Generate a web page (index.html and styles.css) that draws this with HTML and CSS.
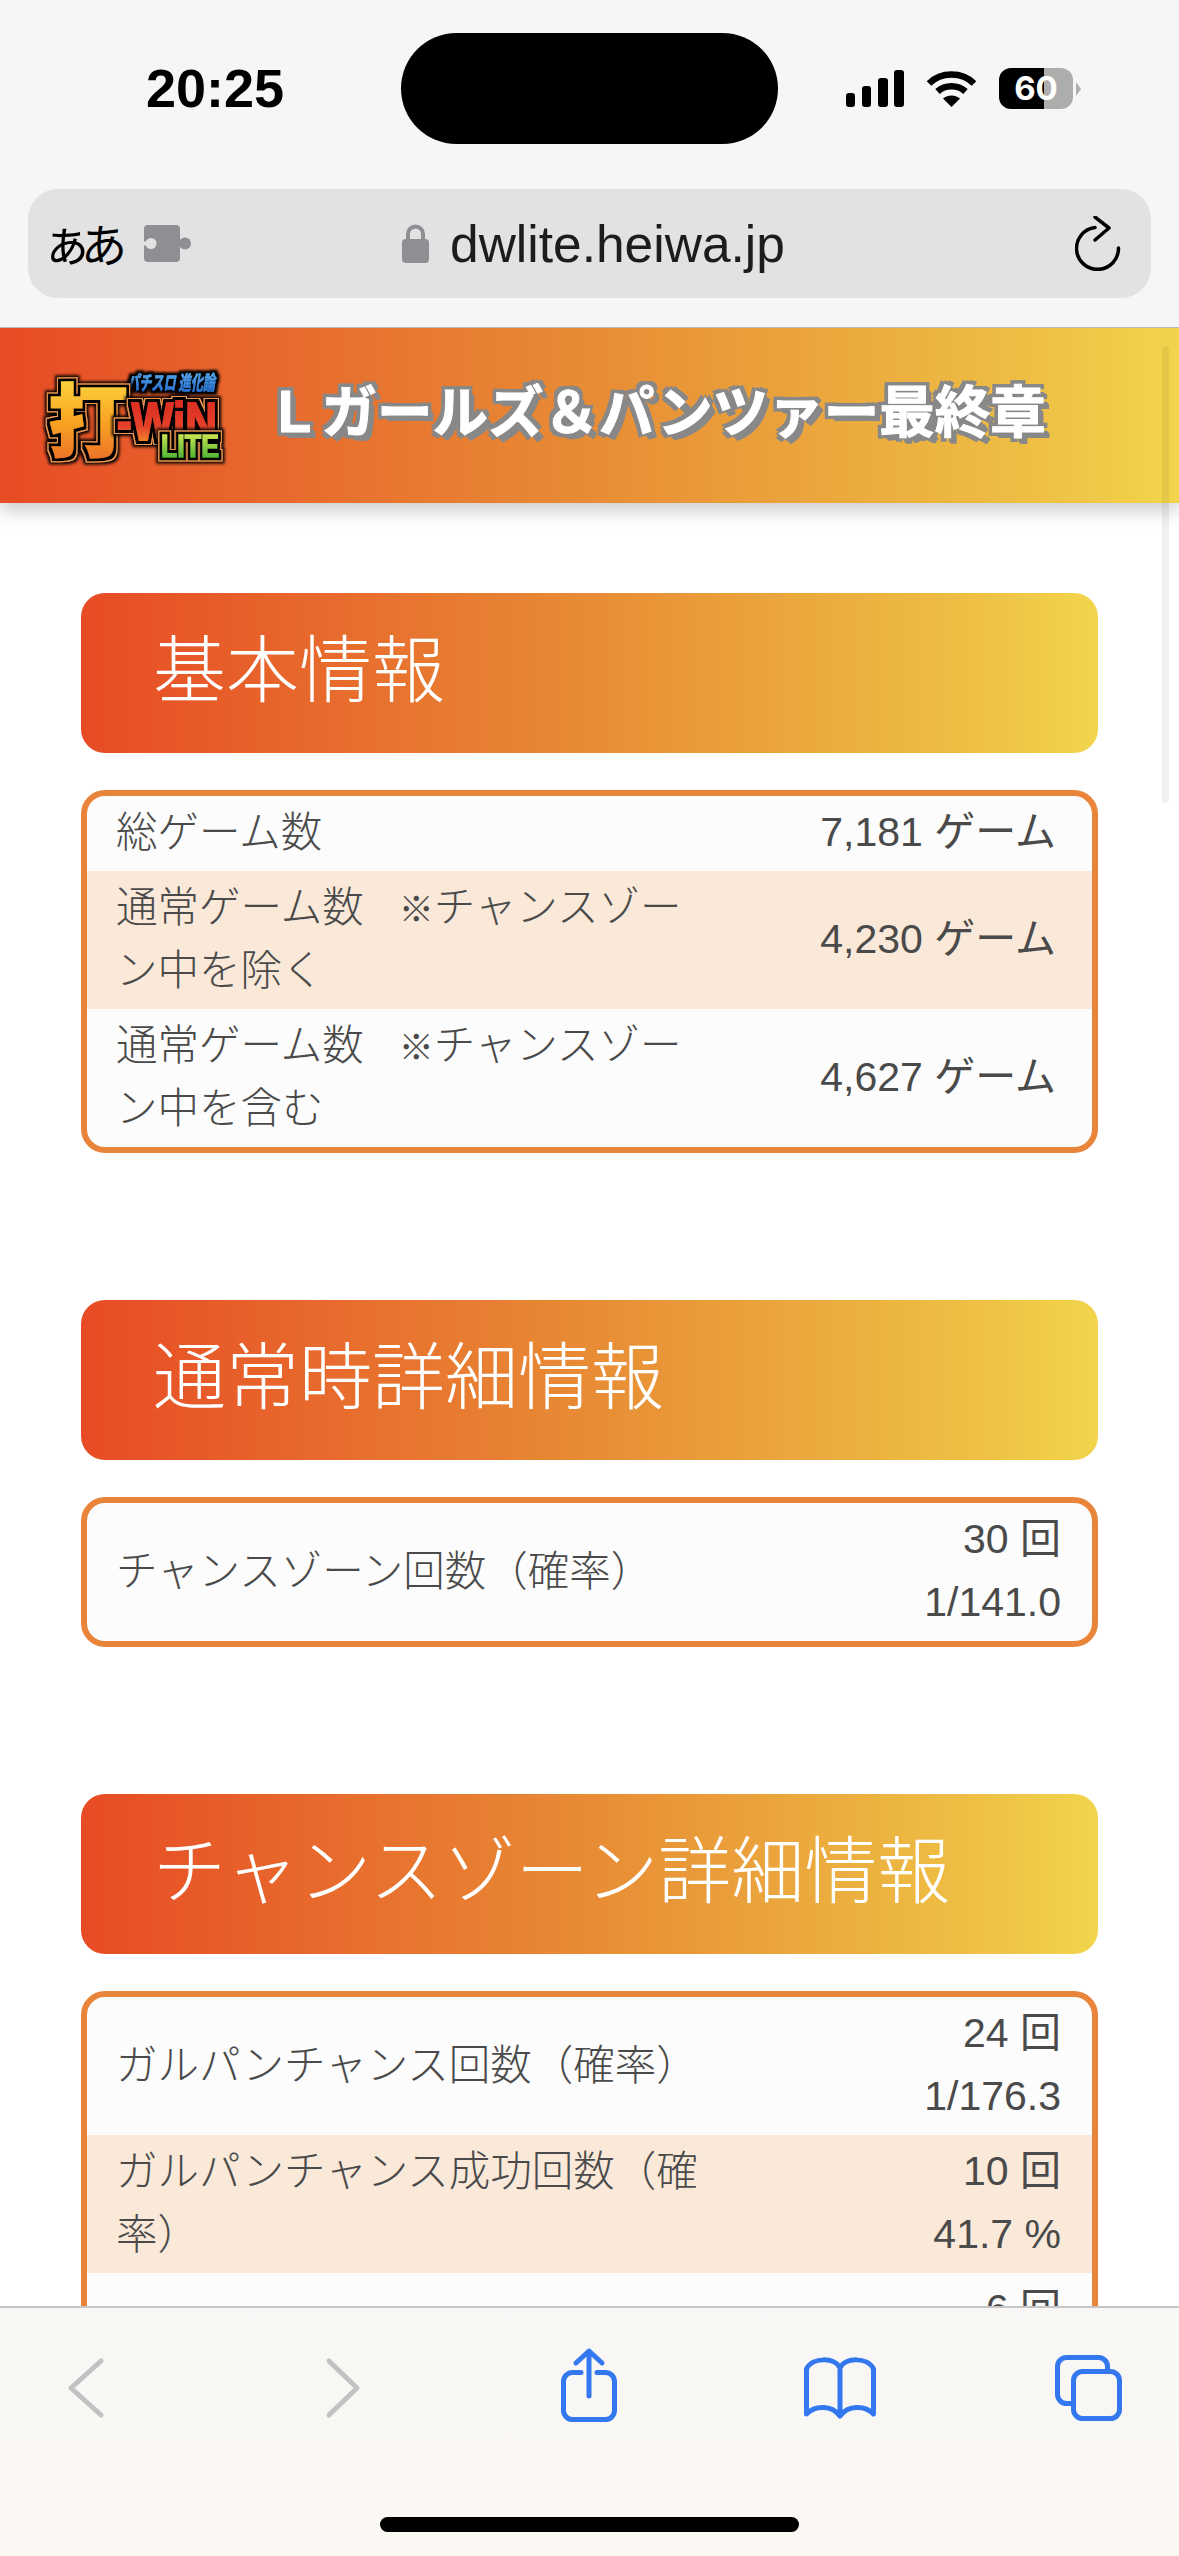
FILE: index.html
```html
<!doctype html>
<html lang="ja">
  <head>
    <meta charset="UTF-8" />
    <meta name="viewport" content="width=device-width, initial-scale=1.0" />
    <title>打-WIN LITE</title>
    <link rel="stylesheet" href="styles.css">
  </head>
  <body>
    <div class="phone">
      <!-- Safari の上部バー -->
      <div class="browser-top">
        <div class="status-bar">
          <div class="time">20:25</div>
          <div class="island"></div>
          <div class="status-icons">
            <svg class="signal" width="58" height="37" viewBox="0 0 58 37">
              <rect x="0" y="23" width="9" height="14" rx="3" />
              <rect x="16" y="16" width="9" height="21" rx="3" />
              <rect x="32" y="8" width="10" height="29" rx="3" />
              <rect x="48" y="0" width="10" height="37" rx="3" />
            </svg>
            <svg class="wifi" width="51" height="37" viewBox="0 0 51 37">
              <path d="M3 13.5C15 1.500 36 1.500 48 13.500" fill="none" stroke="#000" stroke-width="6.500" />
              <path d="M11.500 21.500C19 14.500 32 14.500 39.500 21.500" fill="none" stroke="#000" stroke-width="6.500" />
              <path d="M17 28.500C22 24.500 29 24.500 34 28.500L25.500 37Z" />
            </svg>
            <div class="battery">
              <div class="battery-body">60</div>
              <div class="battery-tip"></div>
            </div>
          </div>
        </div>

        <div class="url-bar">
          <div class="url-left">
            <span class="aa"><span class="aa-small">ぁ</span>あ</span>
            <svg width="47" height="37" viewBox="0 0 47 37">
              <rect x="0" y="0" width="36" height="37" rx="4" fill="#8e8e93" />
              <rect x="34" y="15" width="8" height="7" fill="#8e8e93" />
              <circle cx="41" cy="18.500" r="6" fill="#8e8e93" />
              <circle cx="7" cy="18.500" r="5.500" fill="#e2e2e2" />
              <rect x="0" y="16.500" width="5" height="4" fill="#e2e2e2" />
            </svg>
          </div>
          <div class="url-center">
            <svg width="27" height="39" viewBox="0 0 27 39">
              <path d="M6 17V10a7.500 7.500 0 0 1 15 0V17" fill="none" stroke="#8e8e93" stroke-width="4" />
              <rect x="0" y="15" width="27" height="24" rx="4" fill="#8e8e93" />
            </svg>
            <span class="url-text">dwlite.heiwa.jp</span>
          </div>
          <svg class="reload" width="47" height="55" viewBox="0 0 47 55">
            <path d="M20 11.500A21 21 0 1 0 43.500 32" fill="none" stroke="#000" stroke-width="3.500" stroke-linecap="round" />
            <path d="M20 1L34 12L20 24" fill="none" stroke="#000" stroke-width="3.500" stroke-linecap="round" stroke-linejoin="round" />
          </svg>
        </div>
      </div>

      <div class="page">
        <div class="scroll-thumb"></div>

        <header class="site-header">
          <svg class="logo" width="182" height="99" viewBox="0 0 182 99">
            <defs>
              <linearGradient id="logo-yellow" x1="0" y1="0" x2="0" y2="1">
                <stop offset="0" stop-color="#ffe94a" />
                <stop offset="0.55" stop-color="#f9a423" />
                <stop offset="1" stop-color="#e8622a" />
              </linearGradient>
              <linearGradient id="logo-red" x1="0" y1="0" x2="0" y2="1">
                <stop offset="0" stop-color="#d8261f" />
                <stop offset="0.6" stop-color="#e4412a" />
                <stop offset="1" stop-color="#f8b52c" />
              </linearGradient>
              <linearGradient id="logo-green" x1="0" y1="0" x2="0" y2="1">
                <stop offset="0" stop-color="#e6f05a" />
                <stop offset="1" stop-color="#2fa82c" />
              </linearGradient>
              <linearGradient id="logo-blue" x1="0" y1="0" x2="0" y2="1">
                <stop offset="0" stop-color="#63b6f0" />
                <stop offset="1" stop-color="#1c62c8" />
              </linearGradient>
              <!-- 文字の縁取り: 黒 / オレンジ / 黒のにじみ -->
              <filter id="logo-outline" filterUnits="userSpaceOnUse" x="-10" y="-10" width="202" height="119">
                <feMorphology in="SourceAlpha" operator="dilate" radius="6" result="wide" />
                <feGaussianBlur in="wide" stdDeviation="1.500" result="glow" />
                <feMorphology in="SourceAlpha" operator="dilate" radius="4" result="mid" />
                <feFlood flood-color="#f09a52" />
                <feComposite in2="mid" operator="in" result="rim" />
                <feMorphology in="SourceAlpha" operator="dilate" radius="2.800" result="edge" />
                <feMerge>
                  <feMergeNode in="glow" />
                  <feMergeNode in="rim" />
                  <feMergeNode in="edge" />
                  <feMergeNode in="SourceGraphic" />
                </feMerge>
              </filter>
              <filter id="logo-outline-thin" filterUnits="userSpaceOnUse" x="-10" y="-10" width="202" height="119">
                <feMorphology in="SourceAlpha" operator="dilate" radius="3" result="edge" />
                <feGaussianBlur in="edge" stdDeviation="0.800" result="glow" />
                <feMerge>
                  <feMergeNode in="glow" />
                  <feMergeNode in="SourceGraphic" />
                </feMerge>
              </filter>
            </defs>
            <text class="logo-sub" x="84" y="22" textLength="88" lengthAdjust="spacingAndGlyphs" fill="url(#logo-blue)" stroke="url(#logo-blue)" filter="url(#logo-outline-thin)">パチスロ 進化論</text>
            <text class="logo-da" x="6" y="82" fill="url(#logo-yellow)" stroke="url(#logo-yellow)" filter="url(#logo-outline)">打</text>
            <text class="logo-win" x="74" y="72" textLength="100" lengthAdjust="spacingAndGlyphs" fill="url(#logo-red)" stroke="url(#logo-red)" filter="url(#logo-outline)">-WiN</text>
            <text class="logo-lite" x="118" y="89" textLength="58" lengthAdjust="spacingAndGlyphs" fill="url(#logo-green)" stroke="url(#logo-green)" filter="url(#logo-outline)">LITE</text>
          </svg>
          <h1 class="site-title">Ｌガールズ＆パンツァー最終章</h1>
        </header>

        <section class="block first">
          <h2 class="block-title">基本情報</h2>
          <div class="data-box">
            <table class="data-table">
              <tr>
                <td class="label">総ゲーム数</td>
                <td class="value game">7,181 ゲーム</td>
              </tr>
              <tr>
                <td class="label">通常ゲーム数<span class="mark">　※</span>チャンスゾーン中を除く</td>
                <td class="value game">4,230 ゲーム</td>
              </tr>
              <tr>
                <td class="label">通常ゲーム数<span class="mark">　※</span>チャンスゾーン中を含む</td>
                <td class="value game">4,627 ゲーム</td>
              </tr>
            </table>
          </div>
        </section>

        <section class="block">
          <h2 class="block-title">通常時詳細情報</h2>
          <div class="data-box">
            <table class="data-table">
              <tr>
                <td class="label">チャンスゾーン回数（確率）</td>
                <td class="value">30 回<br />1/141.0</td>
              </tr>
            </table>
          </div>
        </section>

        <section class="block">
          <h2 class="block-title">チャンスゾーン詳細情報</h2>
          <div class="data-box">
            <table class="data-table">
              <tr>
                <td class="label">ガルパンチャンス回数（確率）</td>
                <td class="value">24 回<br />1/176.3</td>
              </tr>
              <tr>
                <td class="label">ガルパンチャンス成功回数（確率）</td>
                <td class="value">10 回<br />41.7 %</td>
              </tr>
              <tr>
                <td class="label"></td>
                <td class="value">6 回</td>
              </tr>
            </table>
          </div>
        </section>
      </div>

      <!-- Safari の下部ツールバー -->
      <footer class="toolbar">
        <div class="toolbar-icons">
          <svg class="tool-back" width="40" height="80" viewBox="0 0 40 80">
            <path class="tool-off" d="M35 16L5 43L35 70" />
          </svg>
          <svg class="tool-forward" width="38" height="80" viewBox="0 0 38 80">
            <path class="tool-off" d="M5 16L33 43L5 70" />
          </svg>
          <svg class="tool-share" width="66" height="80" viewBox="0 0 66 80">
            <path class="tool-on" d="M25 27.500H16.500a9 9 0 0 0-9 9V65.500a9 9 0 0 0 9 9H49.500a9 9 0 0 0 9-9V36.500a9 9 0 0 0-9-9H41" />
            <path class="tool-on" d="M33 51V6M20 18L33 6L46 18" />
          </svg>
          <svg class="tool-book" width="80" height="80" viewBox="0 0 80 80">
            <path class="tool-on" d="M40 23C35 12 12 12 6.500 24V69C15 60 32 60 40 71C48 60 65 60 73.500 69V24C68 12 45 12 40 23ZM40 23V71" />
          </svg>
          <svg class="tool-tabs" width="77" height="80" viewBox="0 0 77 80">
            <rect class="tool-on" x="23.500" y="26.500" width="46" height="47" rx="9" />
            <path class="tool-on" d="M57.500 26V21.500a9 9 0 0 0-9-9H16.500a9 9 0 0 0-9 9V49.500a9 9 0 0 0 9 9H23" />
          </svg>
        </div>
        <div class="home-bar"></div>
      </footer>
    </div>
  </body>
</html>
```

FILE: styles.css
```css
* {
  box-sizing: border-box;
}

html,
body {
  margin: 0;
  padding: 0;
  overflow: hidden;
}

body {
  font-family: "Liberation Sans", "Noto Sans CJK JP", sans-serif;
  background-color: #fff;
  color: #4a4a4a;
}

.phone {
  width: 1179px;
  height: 2556px;
  display: flex;
  flex-direction: column;
}

/* --- browser top --- */
.browser-top {
  height: 327px;
  flex-shrink: 0;
  padding-top: 33px;
  background-color: #f6f6f6;
}

.status-bar {
  height: 111px;
  display: flex;
  align-items: center;
  padding-left: 146px;
}

.time {
  width: 255px;
  padding-bottom: 2px;
  font-size: 54px;
  font-weight: bold;
  color: #000;
}

.island {
  width: 377px;
  height: 111px;
  border-radius: 56px;
  background-color: #000;
}

.status-icons {
  display: flex;
  align-items: center;
  margin-left: 68px;
}

.wifi {
  margin-left: 22px;
}

.battery {
  display: flex;
  align-items: center;
  margin-left: 22px;
}

.battery-body {
  width: 74px;
  height: 41px;
  border-radius: 12px;
  background: linear-gradient(to right, #000 61%, #adadad 61%);
  color: #fff;
  font-family: Inter, "Liberation Sans", sans-serif;
  font-size: 33px;
  font-weight: 700;
  line-height: 41px;
  text-align: center;
}

.battery-tip {
  width: 0;
  height: 0;
  margin-left: 3px;
  border-top: 7px solid transparent;
  border-bottom: 7px solid transparent;
  border-left: 5px solid #adadad;
}

.url-bar {
  height: 109px;
  margin: 45px 28px 0 28px;
  padding: 0 29px 0 14px;
  display: flex;
  align-items: center;
  border-radius: 30px;
  background-color: #e2e2e2;
  color: #000;
}

.url-left {
  width: 360px;
  display: flex;
  align-items: center;
  gap: 17px;
}

.aa {
  padding-bottom: 5px;
  font-family: "Noto Sans CJK JP", sans-serif;
  font-size: 46px;
  line-height: 60px;
}

.aa-small {
  font-size: 50px;
  letter-spacing: -11px;
}

.url-center {
  flex: 1;
  display: flex;
  align-items: center;
  gap: 21px;
}

.url-text {
  font-size: 51.5px;
  color: #1c1c1e;
}

/* --- page --- */
.page {
  position: relative;
  flex: 1;
  min-height: 0;
  overflow: hidden;
  background-color: #fff;
}

.scroll-thumb {
  position: absolute;
  top: 19px;
  right: 10px;
  z-index: 2;
  width: 7px;
  height: 457px;
  border-radius: 4px;
  background-color: rgba(0, 0, 0, 0.055);
}

.site-header {
  position: relative;
  z-index: 1;
  height: 176px;
  display: flex;
  align-items: center;
  padding-left: 43px;
  border-top: 1px solid #bbb;
  background: linear-gradient(to right, #e74b25, #e88c35 50%, #eec044 88%, #f2d54c);
  box-shadow: 0 8px 18px rgba(0, 0, 0, 0.2);
}

.logo {
  flex-shrink: 0;
  margin-top: 4px;
  overflow: visible;
}

.logo text {
  font-family: "Noto Sans CJK JP", sans-serif;
  font-weight: 700;
}

.logo-da {
  font-size: 78px;
  stroke-width: 3px;
}

.logo .logo-win {
  font-family: "Liberation Sans", sans-serif;
  font-size: 54px;
  stroke-width: 2px;
}

.logo .logo-lite {
  font-family: "Liberation Sans", sans-serif;
  font-size: 31px;
  stroke-width: 1px;
}

.logo-sub {
  font-size: 20px;
  font-style: italic;
  stroke-width: 0.500px;
}

.site-title {
  margin: 0 0 0 41px;
  padding-bottom: 16px;
  font-family: "Noto Sans CJK JP", sans-serif;
  font-size: 55.500px;
  font-weight: 700;
  white-space: nowrap;
  color: #fff;
  -webkit-text-stroke: 1px #fff;
  text-shadow:
    -4px -4px 0 #888, 4px -4px 0 #888, -4px 4px 0 #888, 4px 4px 0 #888,
    0 -4px 0 #888, -4px 0 0 #888, 5px 5px 0 #888, 6px 6px 0 #888;
}

.block {
  margin: 147px 81px 0 81px;
}

.block.first {
  margin-top: 90px;
}

.block-title {
  height: 160px;
  margin: 0 0 37px 0;
  padding: 0 0 18px 72px;
  display: flex;
  align-items: center;
  border-radius: 24px;
  background: linear-gradient(to right, #e74b25, #e88c35 50%, #eec044 88%, #f2d54c);
  font-family: "Noto Sans CJK JP", sans-serif;
  font-size: 73px;
  font-weight: 300;
  color: #fff;
}

.data-box {
  border: 6px solid #e8853a;
  border-radius: 24px;
  overflow: hidden;
  background-color: #fcfcfc;
}

.data-table {
  width: 100%;
  border-collapse: collapse;
  table-layout: fixed;
  font-size: 41px;
  line-height: 63px;
}

.data-table tr:nth-child(even) {
  background-color: #fae9d9;
}

.data-table .label {
  width: 620px;
  padding: 2px 0 10px 29px;
  font-family: "Noto Sans CJK JP", sans-serif;
  font-size: 41.500px;
  font-weight: 300;
}

.mark {
  font-size: 35px;
  line-height: 1;
}

.data-table .value {
  padding: 5px 31px 7px 0;
  text-align: right;
  vertical-align: top;
}

.data-table .value.game {
  padding-right: 36px;
  vertical-align: middle;
}

/* --- toolbar --- */
.toolbar {
  height: 250px;
  flex-shrink: 0;
  padding-top: 37px;
  border-top: 2px solid #c6c6c6;
  background: linear-gradient(to bottom, #f8f7f5, #fbf8f4);
}

.toolbar-icons {
  height: 80px;
  display: flex;
  padding-left: 66px;
}

.tool-forward {
  margin-left: 218px;
}

.tool-share {
  margin-left: 194px;
}

.tool-book {
  margin-left: 178px;
}

.tool-tabs {
  margin-left: 170px;
}

.tool-off {
  fill: none;
  stroke: #c2c2c2;
  stroke-width: 5px;
  stroke-linecap: round;
  stroke-linejoin: round;
}

.tool-on {
  fill: none;
  stroke: #3478f0;
  stroke-width: 5px;
  stroke-linecap: round;
  stroke-linejoin: round;
}

.home-bar {
  width: 419px;
  height: 15px;
  margin: 92px auto 0 auto;
  border-radius: 8px;
  background-color: #000;
}
```
